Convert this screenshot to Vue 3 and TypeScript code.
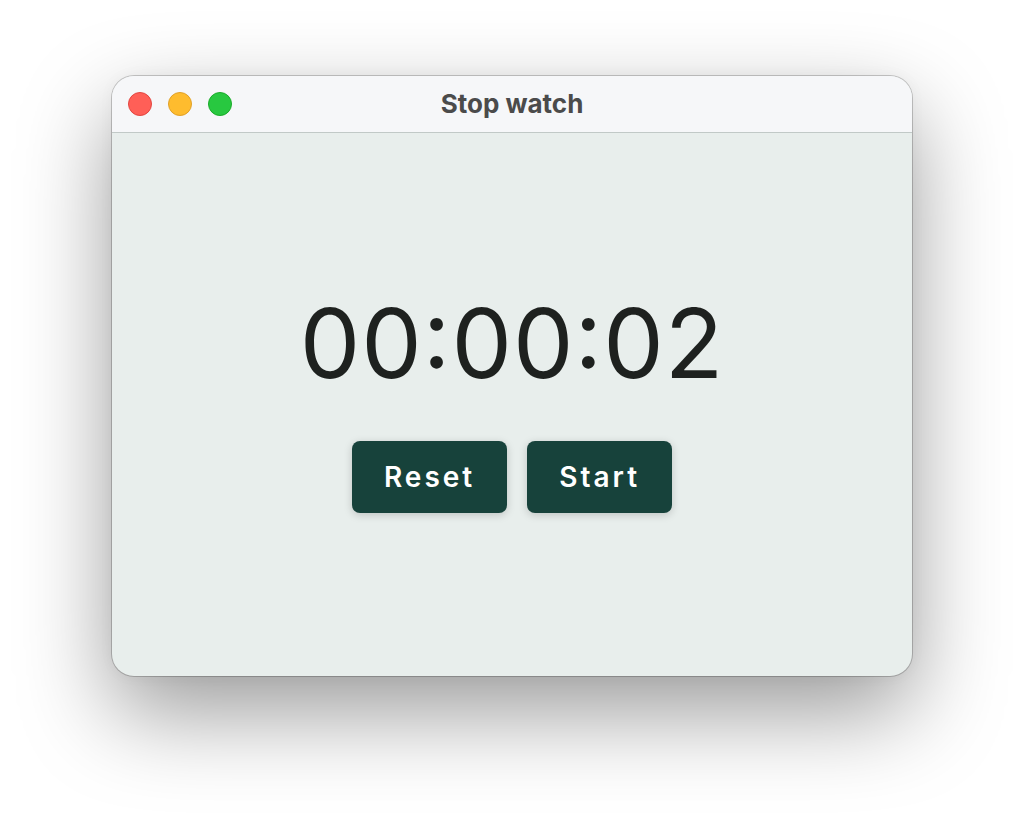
<script setup lang="ts">
import { computed, onBeforeUnmount, ref } from 'vue'

const title = 'Stop watch'
const seconds = ref(2)
const running = ref(false)
let timer: number | undefined

const pad = (value: number): string => String(value).padStart(2, '0')

const display = computed(() => {
  const total = seconds.value
  return [Math.floor(total / 3600), Math.floor(total / 60) % 60, total % 60].map(pad).join(':')
})

function stop(): void {
  window.clearInterval(timer)
  running.value = false
}

function toggle(): void {
  if (running.value) {
    stop()
    return
  }
  running.value = true
  timer = window.setInterval(() => {
    seconds.value += 1
  }, 1000)
}

function reset(): void {
  stop()
  seconds.value = 0
}

onBeforeUnmount(stop)
</script>

<template>
  <div class="desktop">
    <main class="window">
      <header class="titlebar">
        <div class="lights">
          <button class="light close" type="button" aria-label="Close"></button>
          <button class="light minimize" type="button" aria-label="Minimize"></button>
          <button class="light zoom" type="button" aria-label="Zoom"></button>
        </div>
        <h1 class="title">{{ title }}</h1>
      </header>
      <section class="content">
        <div class="time" role="timer">{{ display }}</div>
        <div class="actions">
          <button class="action" type="button" @click="reset">Reset</button>
          <button class="action" type="button" @click="toggle">{{ running ? 'Stop' : 'Start' }}</button>
        </div>
      </section>
    </main>
  </div>
</template>

<style>
body {
  margin: 0;
  background: #fff;
}
</style>

<style scoped>
.desktop {
  box-sizing: border-box;
  display: flex;
  min-height: 100vh;
  padding: 76px 112px 148px;
  overflow: hidden;
  font-family: Inter, "Liberation Sans", sans-serif;
}

.window {
  display: flex;
  flex: 1;
  flex-direction: column;
  overflow: hidden;
  border-radius: 22px;
  background: #e8eeec;
  box-shadow: 0 0 0 1px rgba(0, 0, 0, 0.2), 0 36px 92px rgba(0, 0, 0, 0.4), 0 0 16px rgba(0, 0, 0, 0.04);
}

.titlebar {
  box-sizing: border-box;
  display: grid;
  grid-template-columns: 1fr auto 1fr;
  align-items: center;
  height: 57px;
  padding: 0 16px;
  border-bottom: 1px solid #c1c9c7;
  background: #f6f7f9;
}

.lights {
  display: flex;
  gap: 16px;
}

.light {
  box-sizing: border-box;
  width: 24px;
  height: 24px;
  padding: 0;
  border: 1px solid;
  border-radius: 50%;
}

.close {
  border-color: #e24640;
  background: #ff5f57;
}

.minimize {
  border-color: #e0a028;
  background: #febc2e;
}

.zoom {
  border-color: #1aab29;
  background: #28c840;
}

.title {
  margin: 0;
  color: #4b4b4b;
  font-size: 26px;
  font-weight: 700;
  line-height: 32px;
}

.content {
  display: flex;
  flex: 1;
  flex-direction: column;
  align-items: center;
  justify-content: center;
  gap: 40px;
  padding-bottom: 12px;
}

/* The case feature centres the colons on the height of the digits. */
.time {
  color: #1e211f;
  font-size: 96px;
  font-feature-settings: "case", "calt";
  letter-spacing: 1px;
  line-height: 116px;
}

.actions {
  display: flex;
  gap: 20px;
}

.action {
  height: 72px;
  padding: 0 32px;
  border: 0;
  border-radius: 8px;
  background: #17423b;
  box-shadow: 0 2px 8px rgba(0, 0, 0, 0.18);
  color: #fff;
  font-family: inherit;
  font-size: 28px;
  font-weight: 600;
  letter-spacing: 3px;
}
</style>
